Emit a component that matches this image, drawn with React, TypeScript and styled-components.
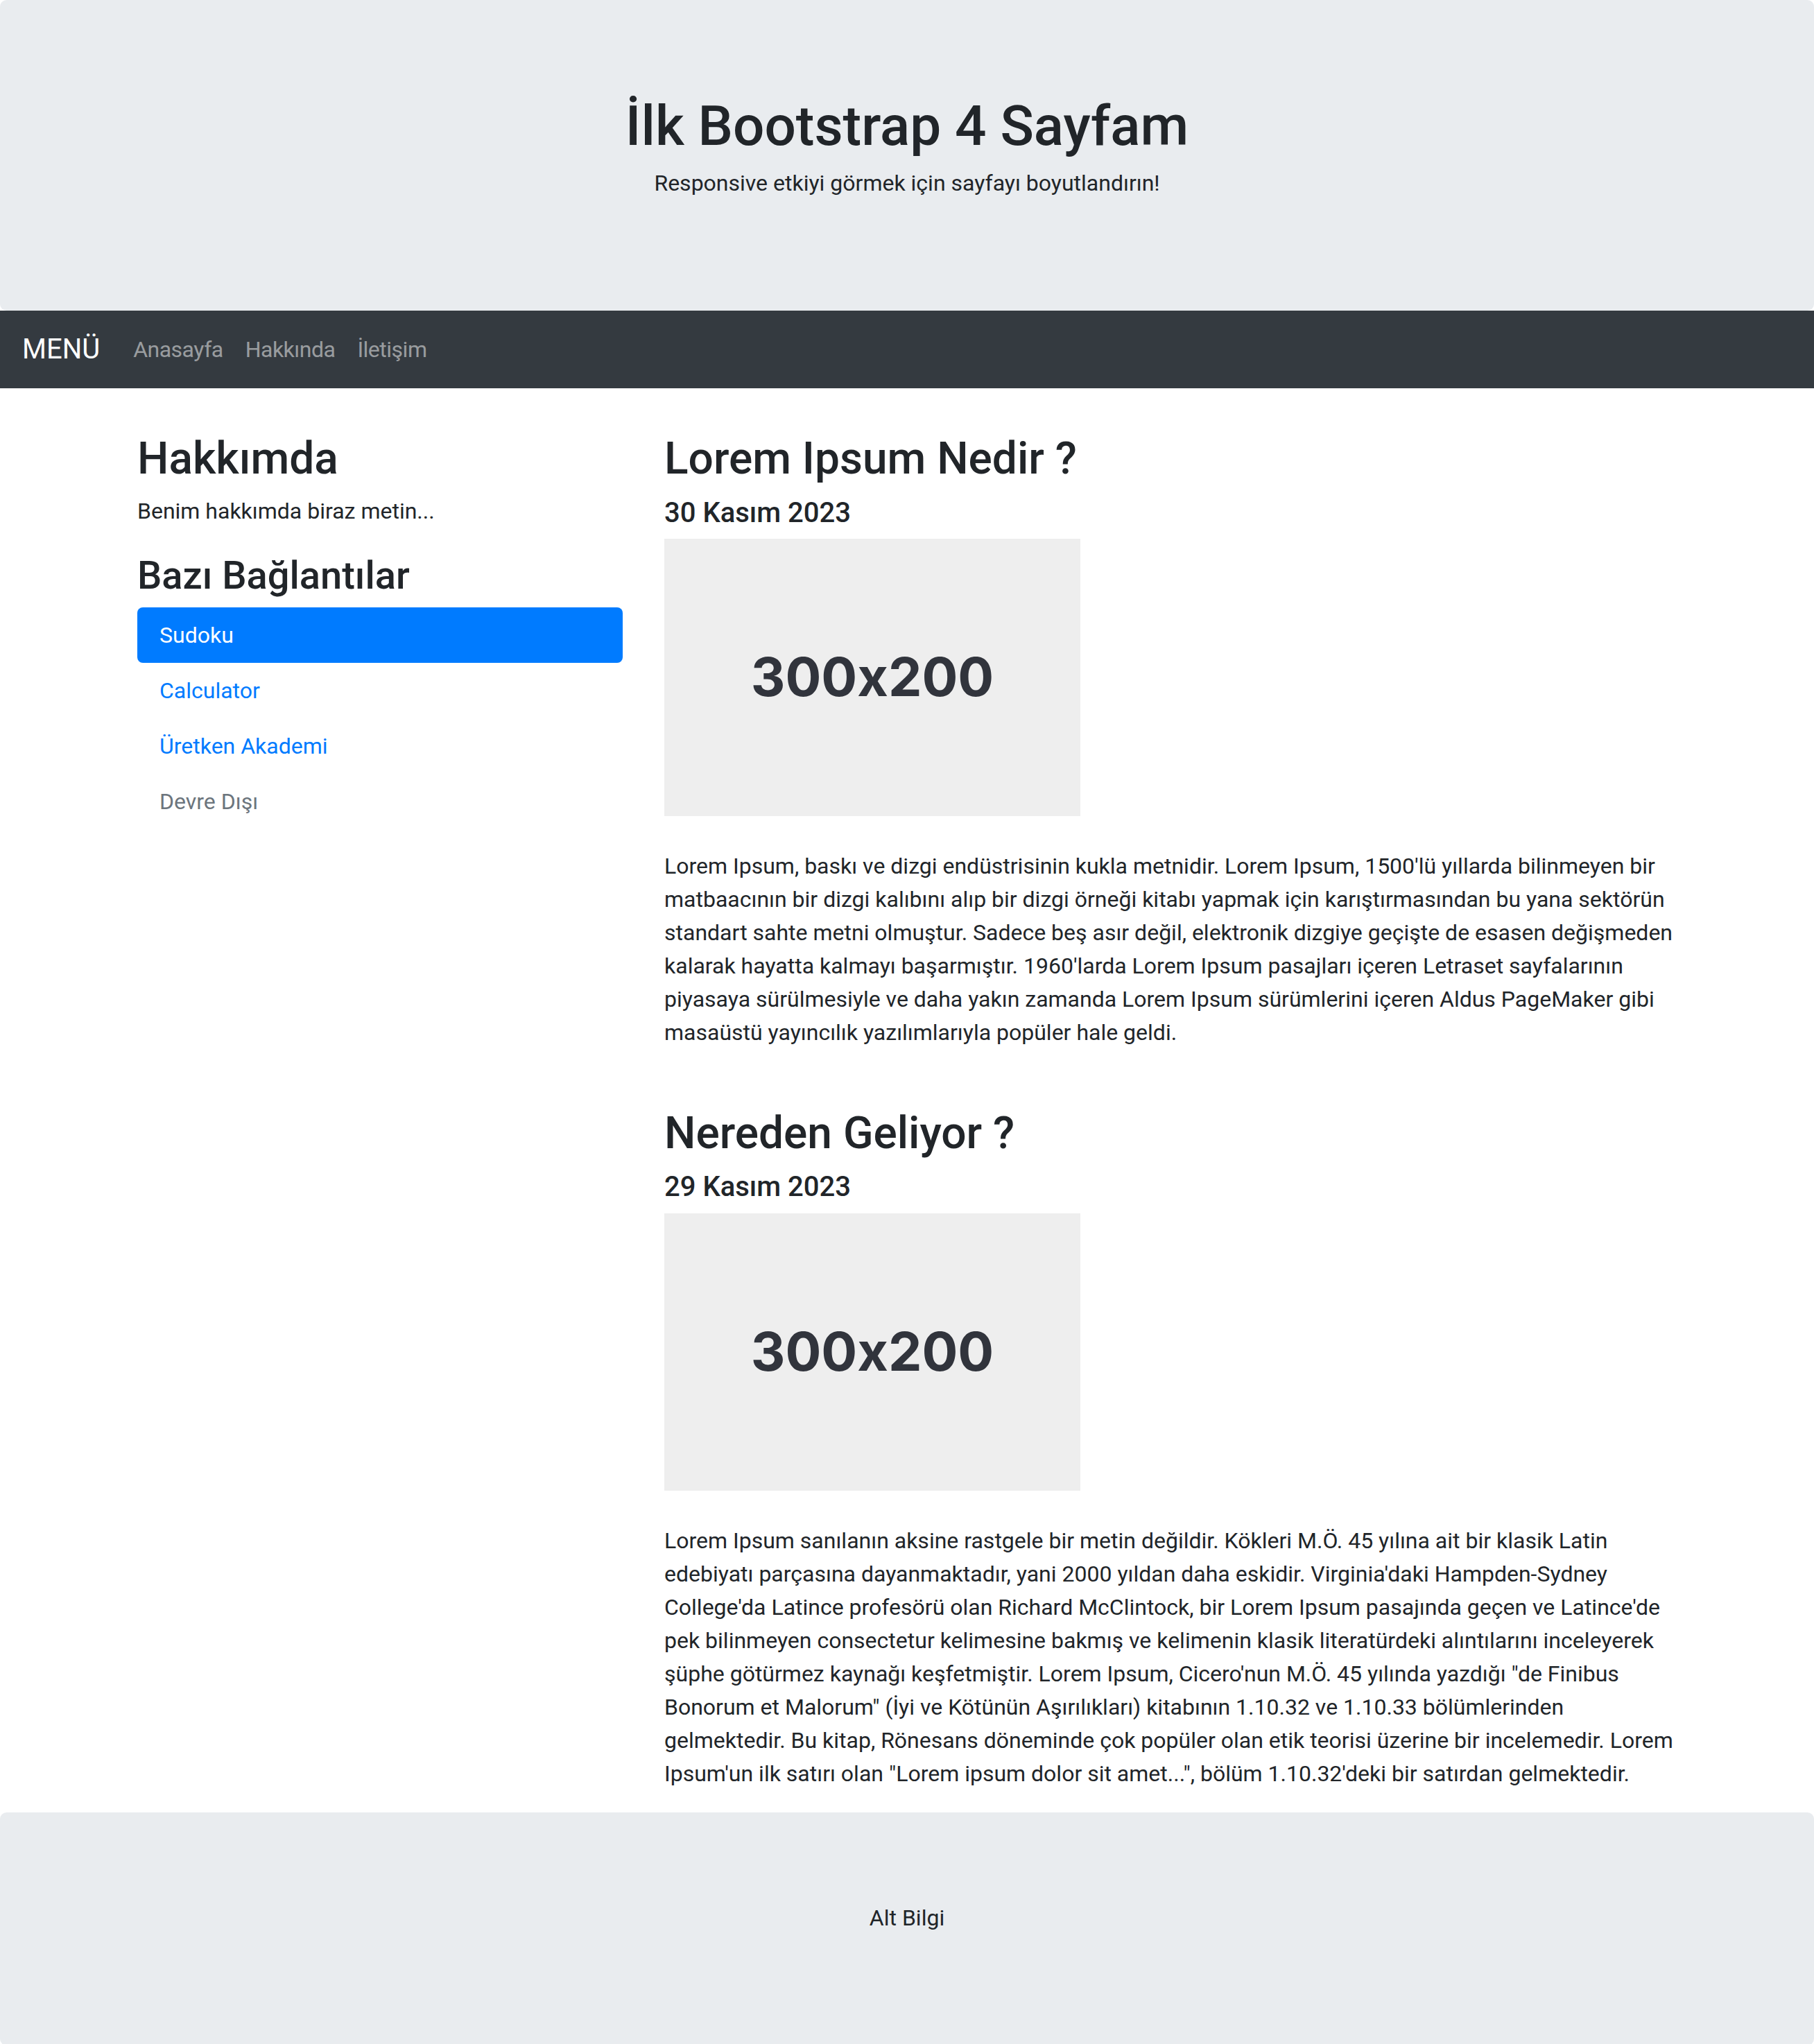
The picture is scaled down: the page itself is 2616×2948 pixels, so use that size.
import React from "react";
import styled, { createGlobalStyle, css } from "styled-components";

const GlobalStyle = createGlobalStyle`
  *, *::before, *::after { box-sizing: border-box; }
  html, body { margin: 0; padding: 0; }
  body {
    font-family: Roboto, "Noto Sans", "Liberation Sans", sans-serif;
    font-size: 32px;
    line-height: 1.5;
    color: #212529;
    background: #ffffff;
  }
`;

/* Roboto sits a little higher than the reference face; nudge headings down
   inside their own box while keeping the box height unchanged. */
const heading = (size: number, gap: number) => css`
  font-size: ${size}px;
  font-weight: 500;
  line-height: 1.2;
  margin: 0 0 calc(${gap}px - 0.07em);
  padding-top: 0.07em;
`;

const Jumbotron = styled.header`
  background: #e9ecef;
  padding: 128px 64px;
  border-radius: 9.6px;
  text-align: center;
  margin: 0;
`;

const Title = styled.h1`
  ${heading(80, 16)}
`;

const Paragraph = styled.p`
  margin: 0 0 32px;
`;

const Navbar = styled.nav`
  display: flex;
  align-items: center;
  background: #343a40;
  padding: 16px 32px;
`;

const Brand = styled.a`
  font-size: 40px;
  line-height: 60px;
  padding: 10px 0;
  margin-right: 32px;
  color: #ffffff;
  text-decoration: none;
  white-space: nowrap;
`;

const NavLinks = styled.ul`
  display: flex;
  list-style: none;
  margin: 0;
  padding: 0;
`;

const NavLink = styled.a`
  display: block;
  padding: 16px;
  color: rgba(255, 255, 255, 0.5);
  text-decoration: none;
  letter-spacing: -0.5px;
`;

const Container = styled.main`
  width: 2280px;
  margin: 60px auto 0;
  display: grid;
  grid-template-columns: 1fr 2fr;
`;

const Column = styled.section`
  padding: 0 30px;
  min-width: 0;
`;

const H2 = styled.h2`
  ${heading(64, 16)}
`;

const H3 = styled.h3`
  ${heading(56, 16)}
`;

const H5 = styled.h5`
  ${heading(40, 16)}
`;

const Pills = styled.ul`
  display: flex;
  flex-direction: column;
  list-style: none;
  margin: 0;
  padding: 0;
`;

const Pill = styled.a<{ $variant?: "active" | "link" | "disabled" }>`
  display: block;
  padding: 16px 32px;
  border-radius: 8px;
  text-decoration: none;
  background: ${(p) => (p.$variant === "active" ? "#007bff" : "transparent")};
  color: ${(p) =>
    p.$variant === "active" ? "#ffffff" : p.$variant === "disabled" ? "#6c757d" : "#007bff"};
`;

const Article = styled.article`
  & + & {
    padding-top: 48px;
  }
`;

const Placeholder = styled.div`
  width: 600px;
  height: 400px;
  background: #eeeeee;
  color: #31343c;
  display: flex;
  align-items: center;
  justify-content: center;
  font-family: Inter, Roboto, sans-serif;
  font-weight: 700;
  font-size: 77px;
  line-height: 1;
  font-feature-settings: "calt" 0;
  font-variant-ligatures: none;
  margin-bottom: 48px;
`;

const Footer = styled.footer`
  background: #e9ecef;
  padding: 128px 64px;
  border-radius: 9.6px;
  text-align: center;
`;

const links: { label: string; variant: "active" | "link" | "disabled" }[] = [
  { label: "Sudoku", variant: "active" },
  { label: "Calculator", variant: "link" },
  { label: "Üretken Akademi", variant: "link" },
  { label: "Devre Dışı", variant: "disabled" },
];

const posts = [
  {
    title: "Lorem Ipsum Nedir ?",
    date: "30 Kasım 2023",
    text:
      "Lorem Ipsum, baskı ve dizgi endüstrisinin kukla metnidir. Lorem Ipsum, 1500'lü yıllarda bilinmeyen bir matbaacının bir dizgi kalıbını alıp bir dizgi örneği kitabı yapmak için karıştırmasından bu yana sektörün standart sahte metni olmuştur. Sadece beş asır değil, elektronik dizgiye geçişte de esasen değişmeden kalarak hayatta kalmayı başarmıştır. 1960'larda Lorem Ipsum pasajları içeren Letraset sayfalarının piyasaya sürülmesiyle ve daha yakın zamanda Lorem Ipsum sürümlerini içeren Aldus PageMaker gibi masaüstü yayıncılık yazılımlarıyla popüler hale geldi.",
  },
  {
    title: "Nereden Geliyor ?",
    date: "29 Kasım 2023",
    text:
      "Lorem Ipsum sanılanın aksine rastgele bir metin değildir. Kökleri M.Ö. 45 yılına ait bir klasik Latin edebiyatı parçasına dayanmaktadır, yani 2000 yıldan daha eskidir. Virginia'daki Hampden-Sydney College'da Latince profesörü olan Richard McClintock, bir Lorem Ipsum pasajında geçen ve Latince'de pek bilinmeyen consectetur kelimesine bakmış ve kelimenin klasik literatürdeki alıntılarını inceleyerek şüphe götürmez kaynağı keşfetmiştir. Lorem Ipsum, Cicero'nun M.Ö. 45 yılında yazdığı \"de Finibus Bonorum et Malorum\" (İyi ve Kötünün Aşırılıkları) kitabının 1.10.32 ve 1.10.33 bölümlerinden gelmektedir. Bu kitap, Rönesans döneminde çok popüler olan etik teorisi üzerine bir incelemedir. Lorem Ipsum'un ilk satırı olan \"Lorem ipsum dolor sit amet...\", bölüm 1.10.32'deki bir satırdan gelmektedir.",
  },
];

export default function App() {
  return (
    <>
      <GlobalStyle />
      <Jumbotron>
        <Title>İlk Bootstrap 4 Sayfam</Title>
        <Paragraph>Responsive etkiyi görmek için sayfayı boyutlandırın!</Paragraph>
      </Jumbotron>

      <Navbar>
        <Brand href="#">MENÜ</Brand>
        <NavLinks>
          <li><NavLink href="#">Anasayfa</NavLink></li>
          <li><NavLink href="#">Hakkında</NavLink></li>
          <li><NavLink href="#">İletişim</NavLink></li>
        </NavLinks>
      </Navbar>

      <Container>
        <Column>
          <H2>Hakkımda</H2>
          <Paragraph>Benim hakkımda biraz metin...</Paragraph>
          <H3>Bazı Bağlantılar</H3>
          <Pills>
            {links.map((l) => (
              <li key={l.label}>
                <Pill href="#" $variant={l.variant}>{l.label}</Pill>
              </li>
            ))}
          </Pills>
        </Column>
        <Column>
          {posts.map((p) => (
            <Article key={p.title}>
              <H2>{p.title}</H2>
              <H5>{p.date}</H5>
              <Placeholder>300x200</Placeholder>
              <Paragraph>{p.text}</Paragraph>
            </Article>
          ))}
        </Column>
      </Container>

      <Footer>
        <Paragraph>Alt Bilgi</Paragraph>
      </Footer>
    </>
  );
}
